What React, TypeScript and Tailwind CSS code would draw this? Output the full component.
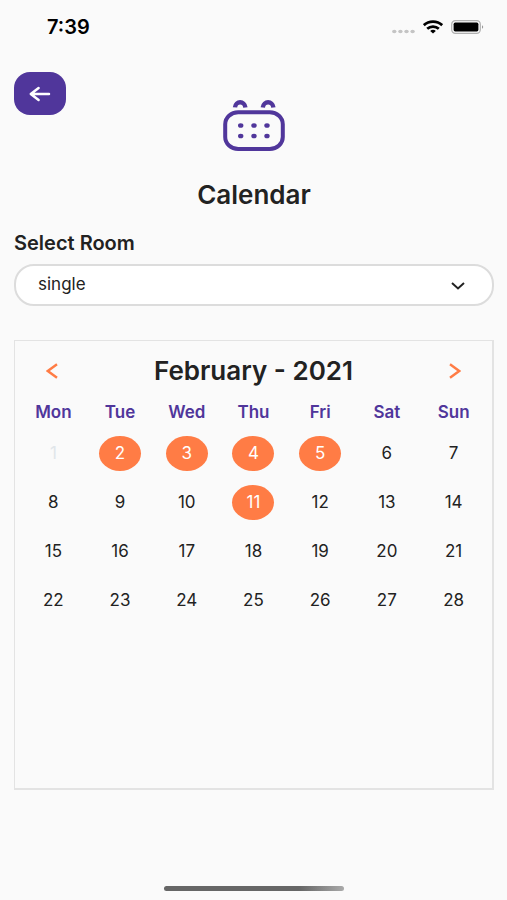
import { useState } from "react";
import clsx from "clsx";

const weekdays = ["Mon", "Tue", "Wed", "Thu", "Fri", "Sat", "Sun"];
const weeks = [0, 1, 2, 3].map((week) => weekdays.map((_, i) => week * 7 + i + 1));
const bookedDays = [2, 3, 4, 5, 11];
const pastDays = [1];

function StatusBar() {
  return (
    <div className="flex h-[54px] items-center justify-between pr-[23px] pl-[47px]">
      <span className="text-xl font-semibold text-black">7:39</span>
      <div className="flex items-center gap-2">
        <svg width="23" height="5" viewBox="0 0 23 5" className="mt-2" fill="#c4c4c4" aria-hidden="true">
          <ellipse cx="2.3" cy="2.5" rx="2.2" ry="1.8" />
          <ellipse cx="8.4" cy="2.5" rx="2.2" ry="1.8" />
          <ellipse cx="14.5" cy="2.5" rx="2.2" ry="1.8" />
          <ellipse cx="20.6" cy="2.5" rx="2.2" ry="1.8" />
        </svg>
        <svg width="20" height="14" viewBox="0 0 20 14" fill="none" stroke="#000" strokeWidth="2.7" aria-hidden="true">
          <path d="M0.8 5.2C5.8 0.4 14.2 0.4 19.2 5.2" />
          <path d="M4.2 8.7C7.4 5.8 12.6 5.8 15.8 8.7" />
          <path d="M7.2 11C8.7 9.4 11.3 9.4 12.8 11L10 13.4Z" fill="#000" stroke="none" />
        </svg>
        <svg width="33" height="14" viewBox="0 0 33 14" aria-hidden="true">
          <rect x="0.7" y="0.7" width="28.6" height="12.6" rx="3.6" fill="none" stroke="#b0b0b0" strokeWidth="1.2" />
          <rect x="2.6" y="2.6" width="24.8" height="8.8" rx="1.6" fill="#000" />
          <path d="M31 5.2C32.6 5.8 32.6 8.2 31 8.8Z" fill="#999" />
        </svg>
      </div>
    </div>
  );
}

function CalendarIcon() {
  return (
    <svg width="62" height="53" viewBox="0 0 62 53" fill="none" stroke="#50369b" aria-hidden="true">
      <rect x="2.2" y="13.2" width="57.6" height="36.8" rx="13" ry="12" strokeWidth="4" />
      <path d="M12 8.4C12.6 1.6 21.6 1.6 22.4 8.4" strokeWidth="4.4" />
      <path d="M39.8 8.4C40.6 1.6 49.6 1.6 50.4 8.4" strokeWidth="4.4" />
      <g fill="#50369b" stroke="none">
        <ellipse cx="17.7" cy="26.5" rx="2.7" ry="2.3" />
        <ellipse cx="31" cy="26.5" rx="2.7" ry="2.3" />
        <ellipse cx="44" cy="26.5" rx="2.7" ry="2.3" />
        <ellipse cx="17.7" cy="37" rx="2.7" ry="2.3" />
        <ellipse cx="31" cy="37" rx="2.7" ry="2.3" />
        <ellipse cx="44" cy="37" rx="2.7" ry="2.3" />
      </g>
    </svg>
  );
}

export default function App() {
  const [room, setRoom] = useState("single");

  return (
    <div className="flex min-h-screen flex-col bg-[#fafafa] font-['Inter',sans-serif] text-[#222]">
      <StatusBar />

      <main className="flex flex-1 flex-col pt-[18px] pr-[13px] pl-[14px]">
        <header className="grid grid-cols-[52px_1fr_52px] items-start">
          <button
            type="button"
            aria-label="Back"
            className="flex h-[43px] w-[52px] items-center justify-center rounded-2xl bg-[#50369b]"
          >
            <svg width="22" height="16" viewBox="0 0 22 16" fill="none" stroke="#fff" strokeWidth="2.5" strokeLinecap="round" strokeLinejoin="round" aria-hidden="true">
              <path d="M20 8H2M9.6 2L1.8 8L9.6 14" />
            </svg>
          </button>
          <div className="flex flex-col items-center pt-[27px]">
            <CalendarIcon />
            <h1 className="mt-[27px] text-[26px]/8 font-semibold">Calendar</h1>
          </div>
        </header>

        <label htmlFor="room" className="mt-[18px] text-xl font-semibold">
          Select Room
        </label>
        <div className="relative mt-[7px]">
          <select
            id="room"
            value={room}
            onChange={(e) => setRoom(e.target.value)}
            className="h-[42px] w-full appearance-none rounded-[20px] border-2 border-[#dcdcdc] bg-white px-[22px] text-[17px]"
          >
            <option value="single">single</option>
            <option value="double">double</option>
          </select>
          <svg
            width="14"
            height="8"
            viewBox="0 0 14 8"
            fill="none"
            stroke="#222"
            strokeWidth="2"
            className="pointer-events-none absolute top-[18px] right-[29px]"
            aria-hidden="true"
          >
            <path d="M1 1L7 6.4L13 1" />
          </svg>
        </div>

        <section className="mt-[34px] flex-1 border border-r-2 border-b-2 border-[#e3e3e3] px-[5px] pt-3">
          <div className="flex items-center justify-between px-6">
            <button type="button" aria-label="Previous month" className="flex h-9 w-4 items-center justify-center">
              <svg width="12" height="16" viewBox="0 0 12 16" fill="none" stroke="#ff7c45" strokeWidth="2.4" aria-hidden="true">
                <path d="M11 1.2L1.8 8L11 14.8" />
              </svg>
            </button>
            <h2 className="text-[26px]/8 font-semibold">February - 2021</h2>
            <button type="button" aria-label="Next month" className="flex h-9 w-4 items-center justify-center">
              <svg width="12" height="16" viewBox="0 0 12 16" fill="none" stroke="#ff7c45" strokeWidth="2.4" aria-hidden="true">
                <path d="M1 1.2L10.2 8L1 14.8" />
              </svg>
            </button>
          </div>

          <table className="mt-2 w-full table-fixed text-center text-[17px]">
            <thead>
              <tr className="h-8 text-[#50369b]">
                {weekdays.map((day) => (
                  <th key={day} scope="col" className="p-0 text-center font-semibold">
                    {day}
                  </th>
                ))}
              </tr>
            </thead>
            <tbody>
              {weeks.map((week) => (
                <tr key={week[0]} className="h-[49px]">
                  {week.map((day) => (
                    <td key={day} className="p-0">
                      <button
                        type="button"
                        disabled={pastDays.includes(day)}
                        className={clsx(
                          "mx-auto flex h-[35px] w-[42px] items-center justify-center rounded-[50%]",
                          bookedDays.includes(day) && "bg-[#ff7c45] text-white",
                          pastDays.includes(day) && "text-[#e1e6ea]"
                        )}
                      >
                        {day}
                      </button>
                    </td>
                  ))}
                </tr>
              ))}
            </tbody>
          </table>
        </section>
      </main>

      <footer className="flex justify-center pt-24 pb-[9px]">
        <div className="h-[5px] w-[180px] rounded-full bg-linear-to-r from-[#666] from-75% to-[#aaa]" />
      </footer>
    </div>
  );
}
